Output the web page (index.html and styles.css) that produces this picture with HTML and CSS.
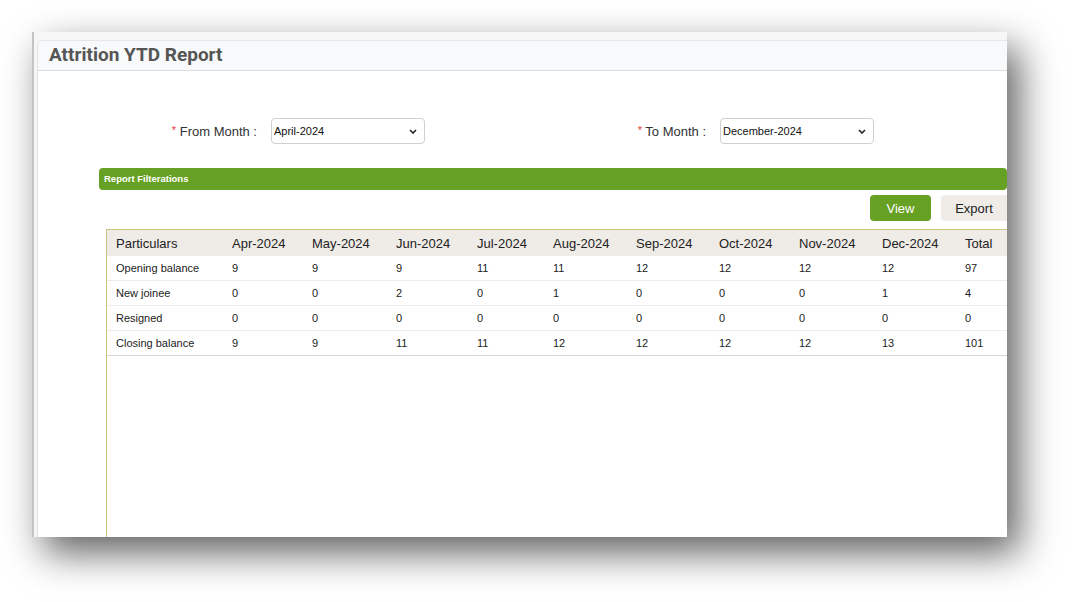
FILE: index.html
```html
<!DOCTYPE html>
<html lang="en">
<head>
  <meta charset="UTF-8" />
  <title>Attrition YTD Report</title>
  <link rel="stylesheet" href="styles.css">
</head>
<body>

  <div class="shot">
    <div class="panel">
      <div class="panel-head">
        <h1>Attrition YTD Report</h1>
      </div>

      <div class="filters">
        <div class="field">
          <label for="fromMonth"><span class="req">*</span> From Month :</label>
          <div class="select-wrap">
            <select id="fromMonth">
              <option>April-2024</option>
            </select>
            <svg class="chev" width="8" height="5" viewBox="0 0 8 5"><path d="M1 1l3 3 3-3" fill="none" stroke="#222" stroke-width="1.6"/></svg>
          </div>
        </div>
        <div class="field">
          <label for="toMonth"><span class="req">*</span> To Month :</label>
          <div class="select-wrap">
            <select id="toMonth">
              <option>December-2024</option>
            </select>
            <svg class="chev" width="8" height="5" viewBox="0 0 8 5"><path d="M1 1l3 3 3-3" fill="none" stroke="#222" stroke-width="1.6"/></svg>
          </div>
        </div>
      </div>

      <div class="report">
        <div class="report-bar">Report Filterations</div>
        <div class="actions">
          <button class="btn view">View</button>
          <button class="btn export">Export</button>
        </div>

        <div class="table-wrap">
          <table class="ytd">
            <colgroup>
              <col class="c-part">
              <col class="c80"><col class="c84"><col class="c81"><col class="c76">
              <col class="c83"><col class="c83"><col class="c80"><col class="c83">
              <col class="c83"><col class="c84">
            </colgroup>
            <thead>
              <tr>
                <th>Particulars</th>
                <th>Apr-2024</th><th>May-2024</th><th>Jun-2024</th><th>Jul-2024</th>
                <th>Aug-2024</th><th>Sep-2024</th><th>Oct-2024</th><th>Nov-2024</th>
                <th>Dec-2024</th><th>Total</th>
              </tr>
            </thead>
            <tbody>
              <tr>
                <td>Opening balance</td>
                <td>9</td><td>9</td><td>9</td><td>11</td><td>11</td><td>12</td><td>12</td><td>12</td><td>12</td><td>97</td>
              </tr>
              <tr>
                <td>New joinee</td>
                <td>0</td><td>0</td><td>2</td><td>0</td><td>1</td><td>0</td><td>0</td><td>0</td><td>1</td><td>4</td>
              </tr>
              <tr>
                <td>Resigned</td>
                <td>0</td><td>0</td><td>0</td><td>0</td><td>0</td><td>0</td><td>0</td><td>0</td><td>0</td><td>0</td>
              </tr>
              <tr>
                <td>Closing balance</td>
                <td>9</td><td>9</td><td>11</td><td>11</td><td>12</td><td>12</td><td>12</td><td>12</td><td>13</td><td>101</td>
              </tr>
            </tbody>
          </table>
        </div>
      </div>
    </div>
  </div>

</body>
</html>
```

FILE: styles.css
```css
html, body {
  min-height: 602px;
}

body {
  margin: 0;
  padding: 0;
  background: #fff;
  font-family: 'Liberation Sans', Arial, sans-serif;
  color: #222;
  overflow: hidden;
}

/* the cropped screenshot frame with its drop shadow */
.shot {
  margin: 32px 0 0 32px;
  width: 975px;
  height: 505px;
  overflow: hidden;
  background: #f6f6f6;
  border-left: 2px solid #c4c4c4;
  padding: 8px 0 0 3px;
  box-sizing: border-box;
  box-shadow: 12px 16px 36px rgba(0, 0, 0, 0.62);
}

.panel {
  background: #fff;
  border-left: 1px solid #e2e2e2;
  border-top: 1px solid #e6e6e6;
  border-radius: 6px 0 0 0;
  height: 100%;
  width: 1060px;
}

.panel-head {
  background: #f8f9fa;
  border-bottom: 1px solid #dcdcdc;
  border-radius: 6px 0 0 0;
  height: 29px;
  padding-left: 11px;
}

.panel-head h1 {
  margin: 0;
  font-family: Roboto, 'Liberation Sans', sans-serif;
  font-weight: 700;
  font-size: 19px;
  line-height: 27px;
  color: #555;
}

.filters {
  display: grid;
  grid-template-columns: 449px 449px;
  margin-top: 47px;
}

.field {
  display: flex;
  align-items: center;
  gap: 14px;
}

.field label {
  width: 219px;
  text-align: right;
  font-size: 13px;
  color: #333;
}

.req {
  color: #e53935;
  font-size: 11px;
  vertical-align: 2px;
}

.select-wrap {
  position: relative;
}

.select-wrap select {
  appearance: none;
  width: 154px;
  height: 26px;
  border: 1px solid #cfcfcf;
  border-radius: 4px;
  background: #fff;
  font-family: 'Liberation Sans', Arial, sans-serif;
  font-size: 11px;
  color: #111;
  padding: 0 2px;
}

.chev {
  position: absolute;
  right: 8px;
  top: 11px;
}

.report {
  margin: 24px 0 0 61px;
  width: 908px;
}

.report-bar {
  background: #66a124;
  color: #fff;
  font-size: 9.5px;
  font-weight: bold;
  height: 22px;
  line-height: 22px;
  padding-left: 5px;
  border-radius: 4px;
}

.actions {
  display: flex;
  justify-content: flex-end;
  gap: 10px;
  margin-top: 5px;
}

.btn {
  height: 26px;
  border: none;
  border-radius: 4px;
  font-family: 'Liberation Sans', Arial, sans-serif;
  font-size: 13px;
  cursor: pointer;
}

.btn.view {
  width: 61px;
  background: #66a124;
  color: #fff;
}

.btn.export {
  width: 66px;
  background: #efebe7;
  color: #222;
  border-radius: 4px 0 0 4px;
}

.table-wrap {
  margin: 8px 0 0 7px;
  border-left: 1px solid #c9c47e;
  border-top: 1px solid #c9c47e;
  height: 320px;
  width: 960px;
}

.ytd {
  border-collapse: collapse;
  table-layout: fixed;
  width: 930px;
}

.c-part { width: 116px; }
.c76 { width: 76px; }
.c80 { width: 80px; }
.c81 { width: 81px; }
.c83 { width: 83px; }
.c84 { width: 84px; }

.ytd th {
  background: #efebe6;
  font-weight: normal;
  font-size: 13px;
  text-align: left;
  height: 26px;
  padding: 0 0 0 9px;
}

.ytd td {
  font-size: 11px;
  height: 24px;
  padding: 0 0 0 9px;
  border-bottom: 1px solid #ececec;
}

.ytd tbody tr:last-child td {
  border-bottom: 1px solid #d6d6d6;
}
```
